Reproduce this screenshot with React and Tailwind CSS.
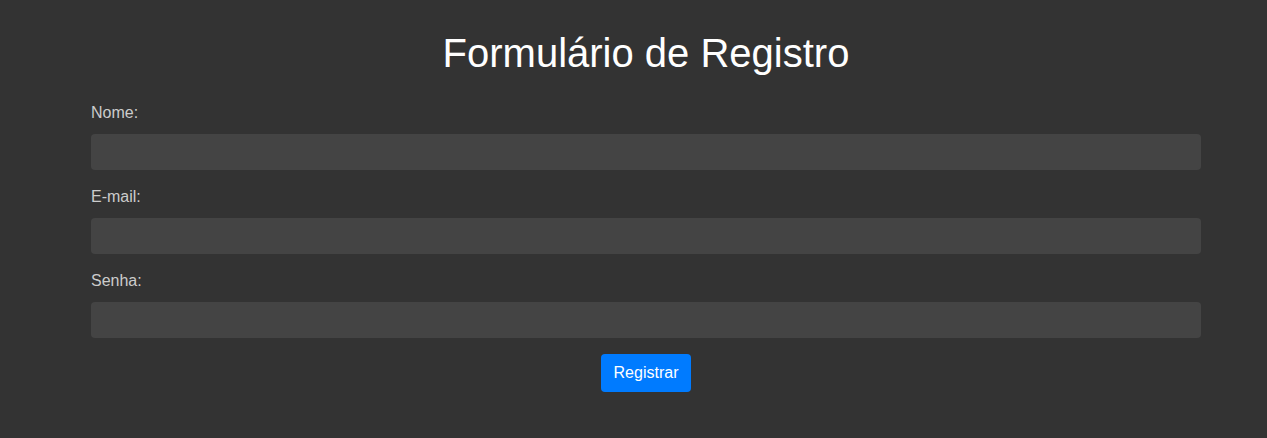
import React, { useState } from "react";

function Field({ label, type, value, onChange }) {
  return (
    <div className="mb-[18px]">
      <label className="block text-[16px] leading-[18px] text-[#cccccc] mb-[12px]">{label}</label>
      <input
        type={type}
        value={value}
        onChange={onChange}
        className="block w-full h-[36px] rounded-[4px] bg-[#444444] px-[10px] text-white outline-none"
      />
    </div>
  );
}

export default function App() {
  const [nome, setNome] = useState("");
  const [email, setEmail] = useState("");
  const [senha, setSenha] = useState("");

  return (
    <div className="min-h-screen w-full bg-[#333333] font-['Liberation_Sans',Arial,sans-serif]">
      <div className="pl-[91px] pt-[30px]">
        <div className="w-[1110px]">
          <h1 className="text-center text-[40px] leading-[46px] text-white mb-[28px]">
            Formulário de Registro
          </h1>
          <form onSubmit={(e) => e.preventDefault()}>
            <Field label="Nome:" type="text" value={nome} onChange={(e) => setNome(e.target.value)} />
            <Field label="E-mail:" type="email" value={email} onChange={(e) => setEmail(e.target.value)} />
            <Field label="Senha:" type="password" value={senha} onChange={(e) => setSenha(e.target.value)} />
            <div className="flex justify-center -mt-[2px]">
              <button
                type="submit"
                className="w-[90px] h-[38px] rounded-[4px] bg-[#007bff] text-white text-[16px]"
              >
                Registrar
              </button>
            </div>
          </form>
        </div>
      </div>
    </div>
  );
}
